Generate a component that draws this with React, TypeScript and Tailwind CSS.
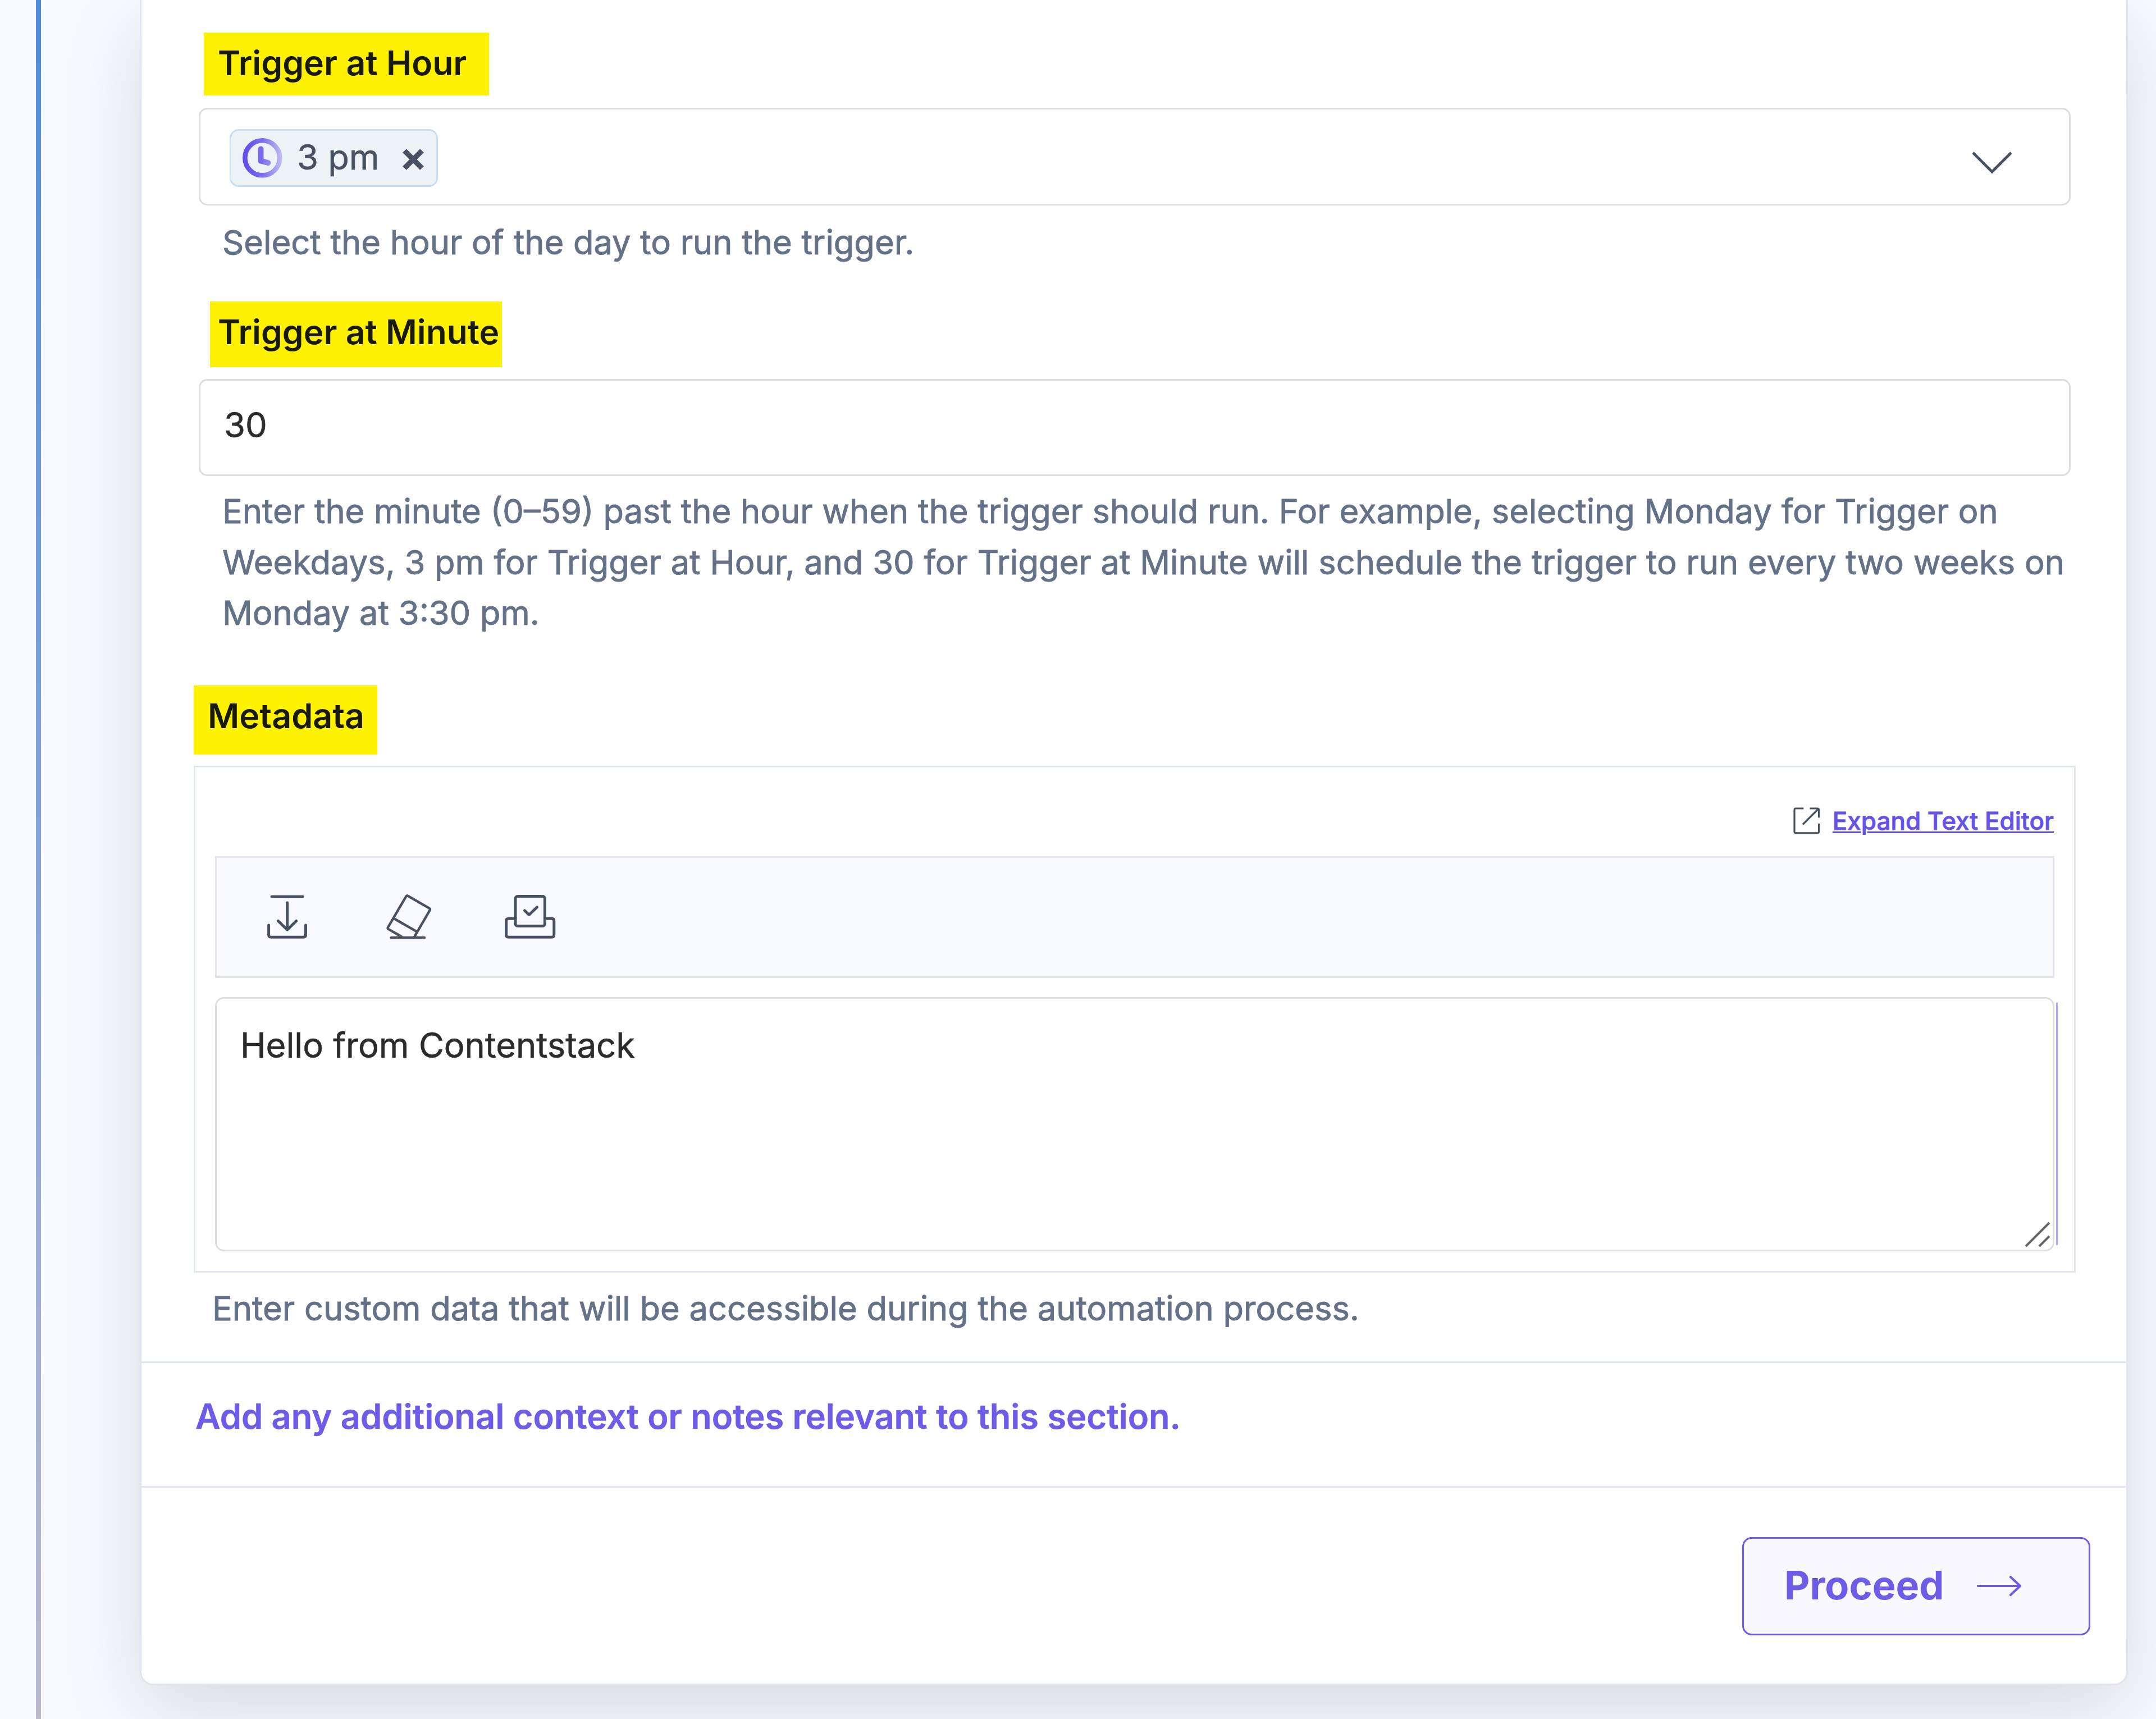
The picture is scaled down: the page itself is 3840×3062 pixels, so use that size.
import type { ReactNode } from "react";

function Highlight({ className, children }: { className: string; children: ReactNode }) {
  return (
    <h3
      className={`bg-[#fff200] text-[#1a1a08] font-semibold whitespace-nowrap leading-[108px] ${className}`}
    >
      {children}
    </h3>
  );
}

function Helper({ className, children }: { className: string; children: ReactNode }) {
  return (
    <p
      className={`text-[59.6px] leading-[90.4px] text-[#647288] whitespace-nowrap [-webkit-text-stroke:0.9px_#647288] ${className}`}
    >
      {children}
    </p>
  );
}

function ClockIcon() {
  return (
    <svg className="h-[71px] w-[71px] shrink-0" viewBox="0 0 71 71" fill="none">
      <defs>
        <linearGradient id="clock" x1="0" y1="0" x2="71" y2="0" gradientUnits="userSpaceOnUse">
          <stop offset="0.1" stopColor="#6450e8" />
          <stop offset="0.5" stopColor="#7d6dec" />
          <stop offset="1" stopColor="#c4bdf4" />
        </linearGradient>
      </defs>
      <circle cx="35.3" cy="35.3" r="31" stroke="url(#clock)" strokeWidth="8.6" />
      <path
        d="M32.5 19.5V40.5L45.5 44"
        stroke="url(#clock)"
        strokeWidth="10"
        strokeLinecap="round"
        strokeLinejoin="round"
      />
    </svg>
  );
}

const iconProps = {
  className: "h-[96px] w-[96px]",
  viewBox: "0 0 96 96",
  fill: "none",
  stroke: "#475161",
  strokeWidth: 5,
  strokeLinecap: "round",
  strokeLinejoin: "round",
} as const;

function DownloadIcon() {
  return (
    <svg {...iconProps}>
      <path d="M20 13.3H75M47.6 24V71M31.5 56.5L47.6 72.2L63.7 56.5M14.6 64V81.3Q14.6 85.3 18.6 85.3H76.5Q80.5 85.3 80.5 81.3V64" />
    </svg>
  );
}

function EraserIcon() {
  return (
    <svg {...iconProps} strokeWidth={4.4}>
      <path d="M34.5 84L11.5 70.8Q10 69.8 11 67.8L43.2 12.8Q44.6 10.8 46.8 12L84.6 33.8Q86.6 35.2 85.6 37.3L58.5 83.8M21.5 52L62.6 75.6M16.5 86.3H76" />
    </svg>
  );
}

function InboxIcon() {
  return (
    <svg {...iconProps}>
      <rect x="22" y="12.6" width="52.4" height="52.8" rx="4" />
      <path d="M22 52.2H9.6Q5.6 52.2 5.6 56.2V81.3Q5.6 85.3 9.6 85.3H86.8Q90.8 85.3 90.8 81.3V56.2Q90.8 52.2 86.8 52.2H74.4M38.5 38L46.3 45.5L60.5 32" />
    </svg>
  );
}

function ExpandIcon() {
  return (
    <svg
      className="h-[48px] w-[48px]"
      viewBox="0 0 48 48"
      fill="none"
      stroke="#475161"
      strokeWidth="3.2"
      strokeLinejoin="round"
    >
      <path d="M18.3 2H4.5Q2 2 2 4.5V43.3Q2 45.8 4.5 45.8H43Q45.5 45.8 45.5 43.3V29M29.5 2H43Q45.5 2 45.5 4.5V18.5M17 30.5L44.5 3" />
    </svg>
  );
}

export default function App() {
  return (
    <div className="flex h-[3062px] w-[3840px] overflow-hidden bg-[#f9faff] text-[61.4px] font-['Inter',sans-serif]">
      <div className="ml-[64px] w-[9px] shrink-0 bg-linear-to-b from-[#4e8cdc] to-[#b9bad0]" />

      <main className="ml-[176px] flex h-[3002px] w-[3541px] shrink-0 flex-col rounded-b-[24px] border-x-[3px] border-b-[3px] border-[#dfe6f0] bg-white shadow-[0_45px_140px_rgba(0,0,0,0.13)]">
        <section className="flex h-[2425px] shrink-0 flex-col items-start pl-[93px]">
          <Highlight className="mt-[58px] ml-[18px] h-[112px] w-[508px] pl-[25px] text-[60.7px]">
            Trigger at Hour
          </Highlight>
          <div className="mt-[22px] ml-[9px] flex h-[174px] w-[3334px] shrink-0 items-center justify-between rounded-[15px] border-[3px] border-[#dddddd] pr-[101px] pl-[52px]">
            <div className="mt-[4px] flex h-[103px] w-[371px] items-center rounded-[16px] border-[3px] border-[#c9def3] bg-[#edf2f7] pl-[20px] leading-[90px] text-[#475161]">
              <ClockIcon />
              <span className="-mt-[2px] ml-[26px] whitespace-nowrap [-webkit-text-stroke:0.6px_#475161]">3 pm</span>
              <svg className="mt-[6px] ml-[41px] h-[38px] w-[38px]" viewBox="0 0 38 38">
                <path d="M3.5 3.5L34.5 34.5M34.5 3.5L3.5 34.5" stroke="#475161" strokeWidth="9.5" />
              </svg>
            </div>
            <svg className="mt-[22px] h-[42px] w-[72px]" viewBox="0 0 72 42" fill="none">
              <path d="M2 3L36 37L70 3" stroke="#475161" strokeWidth="4.8" />
            </svg>
          </div>
          <Helper className="mt-[20px] ml-[51px]">Select the hour of the day to run the trigger.</Helper>

          <Highlight className="mt-[61px] ml-[29px] h-[117px] w-[520px] pl-[14px] text-[60.5px]">
            Trigger at Minute
          </Highlight>
          <div className="mt-[21px] ml-[9px] h-[173px] w-[3334px] shrink-0 rounded-[15px] border-[3px] border-[#dddddd] pl-[42px] leading-[158px] text-[#2b2b2b] [-webkit-text-stroke:0.6px_#2b2b2b]">
            30
          </div>
          <Helper className="mt-[17px] ml-[51px]">
            Enter the minute (0–59) past the hour when the trigger should run. For example, selecting Monday for Trigger on
            <br />
            Weekdays, 3 pm for Trigger at Hour, and 30 for Trigger at Minute will schedule the trigger to run every two weeks on
            <br />
            Monday at 3:30 pm.
          </Helper>

          <Highlight className="mt-[84px] h-[123px] w-[327px] pl-[25px] text-[61px]">Metadata</Highlight>
          <div className="relative mt-[20px] flex h-[903px] w-[3352px] shrink-0 flex-col border-[3px] border-[#e1e8f2] px-[35px]">
            <div className="mt-[67px] flex h-[56px] items-center justify-end gap-[22px] pr-px">
              <ExpandIcon />
              <a className="text-[44px] leading-[56px] font-medium whitespace-nowrap text-[#6552e8] underline decoration-[3px] underline-offset-[3px] [-webkit-text-stroke:0.8px_#6552e8]">
                Expand Text Editor
              </a>
            </div>
            <div className="mt-[35px] flex h-[217px] shrink-0 gap-[120px] border-[3px] border-[#dde5f0] bg-[#f9faff] pt-[56px] pl-[78px]">
              <DownloadIcon />
              <EraserIcon />
              <InboxIcon />
            </div>
            <div className="relative mt-[34px] h-[453px] shrink-0 rounded-[16px] border-[3px] border-[#dddddd] pt-[38px] pl-[42px] leading-[90px] text-[#2b2b2b] [-webkit-text-stroke:0.6px_#2b2b2b]">
              Hello from Contentstack
              <svg
                className="absolute right-[2px] bottom-[3px] h-[48px] w-[48px]"
                viewBox="0 0 48 48"
                stroke="#666666"
                strokeWidth="4"
              >
                <path d="M2 45L44 3M26 45L44 27" />
              </svg>
            </div>
            <div className="absolute top-[419px] right-[29px] h-[432px] w-[3px] bg-[#b3a9f8]" />
          </div>
          <Helper className="mt-[18px] ml-[33px]">
            Enter custom data that will be accessible during the automation process.
          </Helper>
        </section>

        <section className="h-[222px] shrink-0 border-t-[3px] border-[#dfe6f0] pt-[50px] pl-[96px] text-[61.3px] leading-[90px] font-semibold whitespace-nowrap text-[#6c5ce7] [-webkit-text-stroke:0.5px_#6c5ce7]">
          Add any additional context or notes relevant to this section.
        </section>

        <footer className="flex flex-1 items-start justify-end border-t-[3px] border-[#dfe6f0] pt-[88px] pr-[64px]">
          <button className="flex h-[175px] w-[620px] items-center rounded-[17px] border-[3px] border-[#6c5ce7] bg-[#f9f8ff] pl-[72px] text-[70.2px] leading-[90px] font-bold text-[#6c5ce7]">
            <span className="-mt-[4px]">Proceed</span>
            <svg
              className="-mt-[2px] ml-[56px] h-[48px] w-[84px]"
              viewBox="0 0 84 48"
              fill="none"
              stroke="#6c5ce7"
              strokeWidth="4.2"
              strokeLinecap="round"
              strokeLinejoin="round"
            >
              <path d="M4 24H78M62 8L79 24L62 40" />
            </svg>
          </button>
        </footer>
      </main>
    </div>
  );
}
